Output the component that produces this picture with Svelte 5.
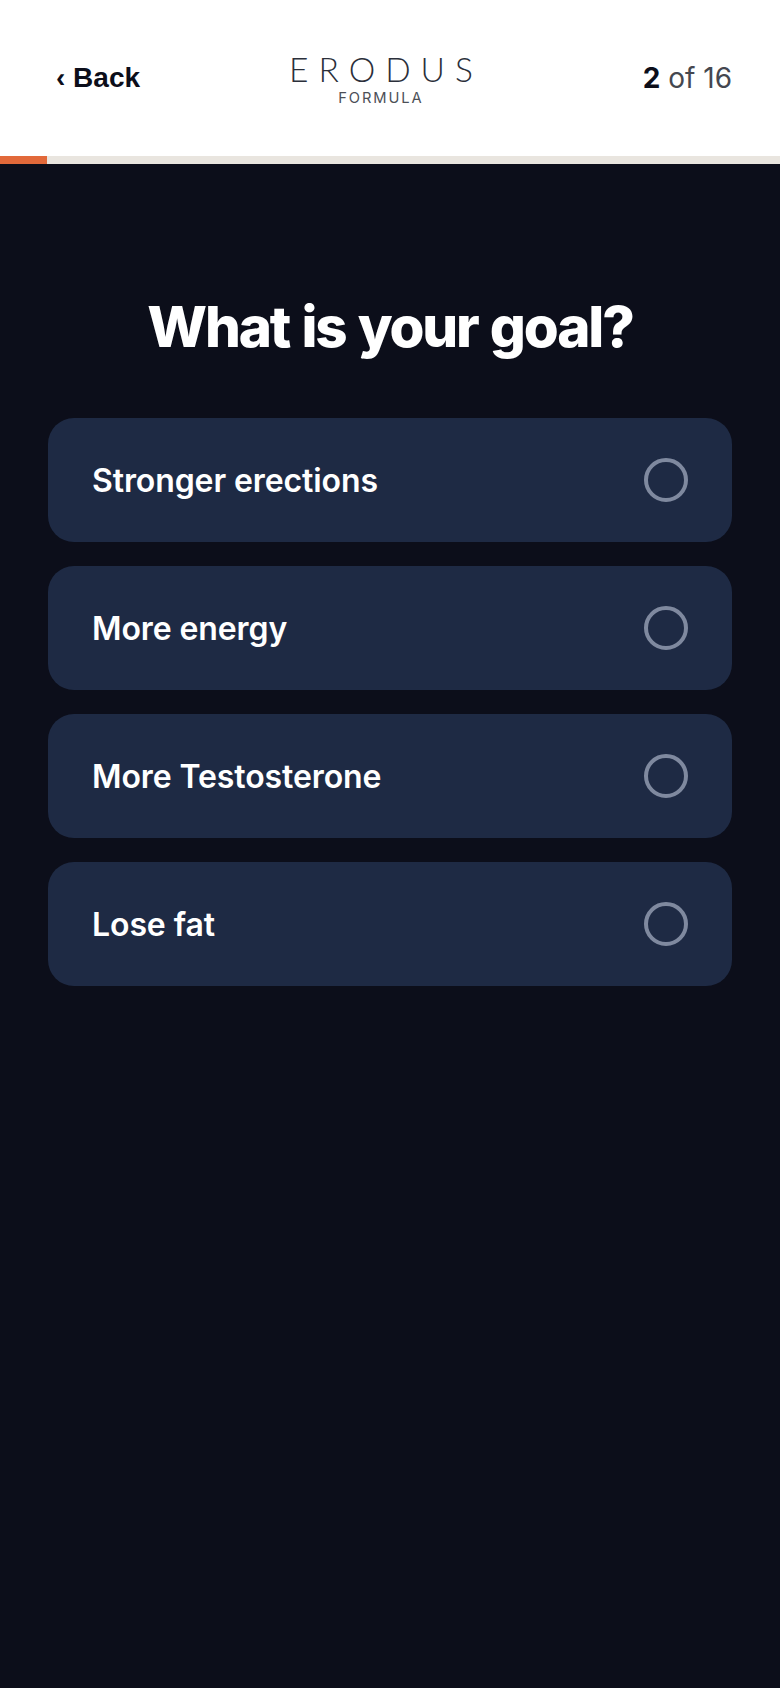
<script>
  const options = ['Stronger erections', 'More energy', 'More Testosterone', 'Lose fat'];
</script>

<div class="page">
  <header class="top">
    <div class="back"><span class="chev">‹</span> Back</div>
    <div class="logo">
      <div class="name">ERODUS</div>
      <div class="sub">FORMULA</div>
    </div>
    <div class="count"><b>2</b> of 16</div>
  </header>
  <div class="track"><div class="fill"></div></div>
  <main class="main">
    <h1>What is your goal?</h1>
    <div class="list">
      {#each options as o}
        <div class="card">
          <span class="label">{o}</span>
          <span class="radio"></span>
        </div>
      {/each}
    </div>
  </main>
</div>

<style>
  :global(body) { margin: 0; background: #0c0e1a; }
  .page { width: 780px; height: 1688px; background: #0c0e1a; font-family: Inter, sans-serif; overflow: hidden; }
  .top { height: 156px; background: #fff; display: grid; grid-template-columns: 233px auto 1fr; align-items: center; padding: 0 48px 0 56px; box-sizing: border-box; }
  .back { font: 700 28px "Liberation Sans", sans-serif; color: #0c0e1a; }
  .logo { text-align: center; color: #2b2f3a; }
  .name { font: 300 33.5px/36px Lato, sans-serif; letter-spacing: 10px; margin-right: -10px; }
  .sub { font: 400 14.7px/16px Inter, sans-serif; letter-spacing: 1.9px; color: #4c4f57; margin-top: 3px; }
  .count { text-align: right; font-size: 28px; color: #45474f; }
  .count b { color: #0c0e1a; font-weight: 700; }
  .track { height: 8px; background: #e9e5df; }
  .fill { width: 47px; height: 100%; background: #e2693a; }
  .main { padding: 0 48px; }
  h1 { margin: 0; padding-top: 125px; font-size: 56.5px; line-height: 75px; font-weight: 800; color: #fff; text-align: center; letter-spacing: -2.15px; word-spacing: 2px; }
  .list { margin-top: 54px; display: flex; flex-direction: column; gap: 24px; }
  .card { height: 124px; background: #1e2a44; border-radius: 26px; display: flex; align-items: center; justify-content: space-between; padding: 0 44px; box-sizing: border-box; }
  .label { font-size: 32px; font-weight: 600; color: #fff; letter-spacing: -0.1px; }
  .radio { width: 44px; height: 44px; box-sizing: border-box; border: 4px solid #7f899f; border-radius: 50%; }
</style>
